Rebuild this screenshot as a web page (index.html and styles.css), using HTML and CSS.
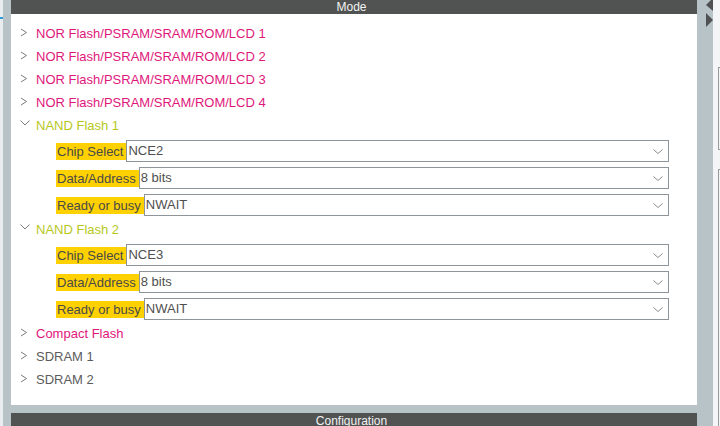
FILE: index.html
```html
<!DOCTYPE html>
<html>
<head>
<meta charset="utf-8">
<link rel="stylesheet" href="styles.css">
</head>
<body>
<div class="app">
  <div class="edge"><span class="tick"></span></div>
  <div class="main">
    <div class="bar">Mode</div>
    <div class="panel">
      <div class="row pink"><svg class="chev" viewBox="0 0 16 23"><path d="M1 7 L6.5 10.5 L1 14"/></svg>NOR Flash/PSRAM/SRAM/ROM/LCD 1</div>
      <div class="row pink"><svg class="chev" viewBox="0 0 16 23"><path d="M1 7 L6.5 10.5 L1 14"/></svg>NOR Flash/PSRAM/SRAM/ROM/LCD 2</div>
      <div class="row pink"><svg class="chev" viewBox="0 0 16 23"><path d="M1 7 L6.5 10.5 L1 14"/></svg>NOR Flash/PSRAM/SRAM/ROM/LCD 3</div>
      <div class="row pink"><svg class="chev" viewBox="0 0 16 23"><path d="M1 7 L6.5 10.5 L1 14"/></svg>NOR Flash/PSRAM/SRAM/ROM/LCD 4</div>
      <div class="row lime"><svg class="chev" viewBox="0 0 16 23"><path d="M0.5 6.5 L5 11 L9.5 6.5"/></svg>NAND Flash 1</div>
      <div class="group">
        <div class="field"><span class="label">Chip Select</span><div class="select">NCE2<svg class="drop" viewBox="0 0 10 5"><path d="M0.5 0.5 L5 4.5 L9.5 0.5"/></svg></div></div>
        <div class="field"><span class="label">Data/Address</span><div class="select">8 bits<svg class="drop" viewBox="0 0 10 5"><path d="M0.5 0.5 L5 4.5 L9.5 0.5"/></svg></div></div>
        <div class="field"><span class="label">Ready or busy</span><div class="select">NWAIT<svg class="drop" viewBox="0 0 10 5"><path d="M0.5 0.5 L5 4.5 L9.5 0.5"/></svg></div></div>
      </div>
      <div class="row lime"><svg class="chev" viewBox="0 0 16 23"><path d="M0.5 6.5 L5 11 L9.5 6.5"/></svg>NAND Flash 2</div>
      <div class="group">
        <div class="field"><span class="label">Chip Select</span><div class="select">NCE3<svg class="drop" viewBox="0 0 10 5"><path d="M0.5 0.5 L5 4.5 L9.5 0.5"/></svg></div></div>
        <div class="field"><span class="label">Data/Address</span><div class="select">8 bits<svg class="drop" viewBox="0 0 10 5"><path d="M0.5 0.5 L5 4.5 L9.5 0.5"/></svg></div></div>
        <div class="field"><span class="label">Ready or busy</span><div class="select">NWAIT<svg class="drop" viewBox="0 0 10 5"><path d="M0.5 0.5 L5 4.5 L9.5 0.5"/></svg></div></div>
      </div>
      <div class="row pink"><svg class="chev" viewBox="0 0 16 23"><path d="M1 7 L6.5 10.5 L1 14"/></svg>Compact Flash</div>
      <div class="row gray"><svg class="chev" viewBox="0 0 16 23"><path d="M1 7 L6.5 10.5 L1 14"/></svg>SDRAM 1</div>
      <div class="row gray"><svg class="chev" viewBox="0 0 16 23"><path d="M1 7 L6.5 10.5 L1 14"/></svg>SDRAM 2</div>
    </div>
    <div class="bar config">Configuration</div>
  </div>
  <div class="side">
    <svg class="arrows" viewBox="0 0 16 30"><path d="M9 5 L16 -2 L16 11 Z"/><path d="M9 13 L16 20 L9 27 Z"/></svg>
  </div>
  <div class="far">
    <div class="box box1"></div>
    <div class="box box2"></div>
  </div>
</div>
</body>
</html>
```
FILE: styles.css
```css
html, body {
  margin: 0;
  padding: 0;
}
body {
  width: 720px;
  height: 426px;
  overflow: hidden;
  font-family: "Liberation Sans", Arial, sans-serif;
  background: #b8c3c8;
}
.app {
  display: flex;
  width: 720px;
  height: 426px;
}
.edge {
  width: 3px;
  background: #e9edef;
  flex: none;
}
.tick {
  display: block;
  margin-top: 17px;
  width: 3px;
  height: 2px;
  background: #2f9bd6;
}
.main {
  flex: none;
  width: 686px;
  margin-left: 8px;
  display: flex;
  flex-direction: column;
}
.bar {
  height: 14px;
  line-height: 14px;
  background: #515352;
  color: #f2f2f2;
  font-size: 12px;
  text-align: center;
  padding-right: 5px;
  flex: none;
}
.config {
  margin-top: 8px;
  height: 13px;
  line-height: 16px;
}
.panel {
  height: 383px;
  background: #ffffff;
  padding-top: 8px;
  flex: none;
}
.row {
  display: flex;
  align-items: center;
  height: 23px;
  padding-left: 9px;
  font-size: 13px;
}
.chev {
  width: 16px;
  height: 23px;
  flex: none;
  align-self: flex-start;
}
.chev path {
  fill: none;
  stroke: #7a7a7a;
  stroke-width: 1;
}
.pink { color: #e0177b; }
.lime { color: #b7c71c; }
.gray { color: #5c5c5c; }
.group {
  display: flex;
  flex-direction: column;
  gap: 5px;
  padding: 3px 28px 2px 45px;
}
.field {
  display: flex;
  align-items: center;
  height: 22px;
}
.label {
  height: 17px;
  line-height: 17px;
  background: #ffd100;
  color: #4a4a4a;
  font-size: 13px;
  padding: 0 3px 0 1px;
  flex: none;
}
.select {
  position: relative;
  flex: 1;
  height: 22px;
  box-sizing: border-box;
  border: 1px solid #8d949a;
  padding-left: 1px;
  line-height: 20px;
  font-size: 13px;
  color: #4f4f4f;
}
.drop {
  position: absolute;
  right: 5px;
  top: 8px;
  width: 10px;
  height: 5px;
}
.drop path {
  fill: none;
  stroke: #8a8a8a;
  stroke-width: 1;
}
.side {
  width: 16px;
  flex: none;
}
.arrows {
  display: block;
  width: 16px;
  height: 30px;
}
.arrows path {
  fill: #4f5152;
}
.far {
  width: 7px;
  flex: none;
  background: #f3f5f6;
  display: flex;
  flex-direction: column;
}
.box {
  margin-left: 5px;
  border: 1px solid #9a9a9a;
  border-right: none;
}
.box1 {
  margin-top: 67px;
  height: 81px;
}
.box2 {
  margin-top: 19px;
  flex: 1;
  border-bottom: none;
}
```
